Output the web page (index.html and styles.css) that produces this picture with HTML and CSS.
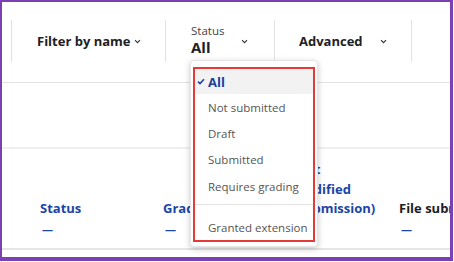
FILE: index.html
```html
<!DOCTYPE html>
<html lang="en">
  <head>
    <meta charset="UTF-8" />
    <meta name="viewport" content="width=device-width, initial-scale=1.0" />
    <title>Submissions</title>
    <link rel="stylesheet" href="styles.css">
  </head>
  <body>
    <main class="frame">
      <section class="toolbar">
        <div class="tool tool-name">
          <span class="tool-title">Filter by name</span>
          <svg class="chevron" width="7" height="5" viewBox="0 0 7 5"><path d="M1 1.2 L3.5 3.7 L6 1.2" /></svg>
        </div>
        <div class="tool tool-status">
          <div class="tool-stack">
            <span class="tool-label">Status</span>
            <span class="tool-value">All</span>
          </div>
          <svg class="chevron" width="7" height="5" viewBox="0 0 7 5"><path d="M1 1.2 L3.5 3.7 L6 1.2" /></svg>
        </div>
        <div class="tool tool-advanced">
          <span class="tool-title">Advanced</span>
          <svg class="chevron" width="7" height="5" viewBox="0 0 7 5"><path d="M1 1.2 L3.5 3.7 L6 1.2" /></svg>
        </div>
      </section>

      <section class="spacer"></section>

      <section class="table-head">
        <div class="col col-status">
          <span class="col-title">Status</span>
          <span class="col-sort">—</span>
        </div>
        <div class="col col-grade">
          <span class="col-title">Grade</span>
          <span class="col-sort">—</span>
        </div>
        <div class="col col-modified">
          <span class="col-title wrap">Last modified (submission)</span>
          <span class="col-sort">—</span>
        </div>
        <div class="col col-files">
          <span class="col-title dark">File submissions</span>
          <span class="col-sort">—</span>
        </div>
      </section>

      <div class="menu">
        <ul class="menu-list">
          <li class="menu-item active">
            <span class="check">
              <svg width="8" height="7" viewBox="0 0 8 7"><path d="M1 3.6 L3 5.6 L7 1.2" /></svg>
            </span>
            All
          </li>
          <li class="menu-item"><span class="check"></span>Not submitted</li>
          <li class="menu-item"><span class="check"></span>Draft</li>
          <li class="menu-item"><span class="check"></span>Submitted</li>
          <li class="menu-item"><span class="check"></span>Requires grading</li>
          <li class="menu-divider"></li>
          <li class="menu-item"><span class="check"></span>Granted extension</li>
        </ul>
      </div>
    </main>
  </body>
</html>
```

FILE: styles.css
```css
* {
  box-sizing: border-box;
}
body {
  margin: 0;
  font-family: "Open Sans", "Noto Sans", sans-serif;
  background-color: #ffffff;
  color: #1d2125;
}

.frame {
  position: relative;
  width: 453px;
  height: 261px;
  border: 3px solid #7b40b5;
  border-top-width: 2px;
  border-left-width: 2px;
  border-bottom-width: 4px;
  overflow: hidden;
  display: flex;
  flex-direction: column;
}

.toolbar {
  display: flex;
  padding: 18px 0 20px 9px;
  border-bottom: 1px solid #e4e4e4;
}

.tool {
  display: flex;
  align-items: center;
  height: 42px;
  border-left: 1px solid #e2e2e2;
}

.tool-name {
  width: 154px;
  padding-left: 25px;
  gap: 3px;
}

.tool-status {
  width: 109px;
  padding-left: 25px;
  gap: 17px;
}

.tool-advanced {
  width: 138px;
  padding-left: 24px;
  gap: 17px;
  border-right: 1px solid #e2e2e2;
}

.tool-title {
  font-size: 13px;
  font-weight: 700;
}

.tool-stack {
  display: flex;
  flex-direction: column;
  padding-bottom: 3px;
}

.tool-label {
  font-size: 11.5px;
  line-height: 15px;
  color: #444;
}

.tool-value {
  font-size: 15px;
  font-weight: 700;
  line-height: 18px;
}

.chevron path {
  fill: none;
  stroke: #333;
  stroke-width: 1.1;
}

.spacer {
  height: 66px;
  border-bottom: 2px solid #efefef;
}

.table-head {
  display: grid;
  grid-template-columns: 123px 130px 106px 1fr;
  padding: 0 0 10px 38px;
  border-bottom: 2px solid #e6e6e6;
}

.col {
  display: flex;
  flex-direction: column;
  justify-content: flex-end;
  height: 89px;
}

.col-title {
  font-size: 13px;
  font-weight: 700;
  line-height: 19.5px;
  color: #1b45a6;
  white-space: nowrap;
}

.col-title.wrap {
  white-space: normal;
  width: min-content;
}

.col-title.dark {
  color: #1d2125;
}

.col-sort {
  font-size: 11px;
  font-weight: 700;
  line-height: 19.5px;
  color: #1b45a6;
  padding-left: 2px;
}

.menu {
  position: absolute;
  left: 188px;
  top: 58px;
  width: 128px;
  padding: 6px 2px 4px;
  background-color: #ffffff;
  border: 1px solid #e6e6e6;
  border-radius: 4px;
  box-shadow: 0 2px 6px rgba(0, 0, 0, 0.22);
}

.menu-list {
  list-style: none;
  margin: 0;
  padding: 0;
  border: 2px solid #e53a35;
}

.menu-item {
  display: flex;
  align-items: center;
  height: 26.3px;
  font-size: 11.5px;
  color: #555;
}

.menu-item.active {
  height: 25px;
  background-color: #f2f2f2;
  color: #1b3f9e;
  font-weight: 700;
  font-size: 13px;
}

.check {
  display: flex;
  align-items: center;
  width: 13px;
  padding-left: 2px;
}

.check path {
  fill: none;
  stroke: #1b3f9e;
  stroke-width: 1.5;
}

.menu-divider {
  height: 1px;
  margin: 5px 0 9px;
  background-color: #e3e3e3;
}
```
